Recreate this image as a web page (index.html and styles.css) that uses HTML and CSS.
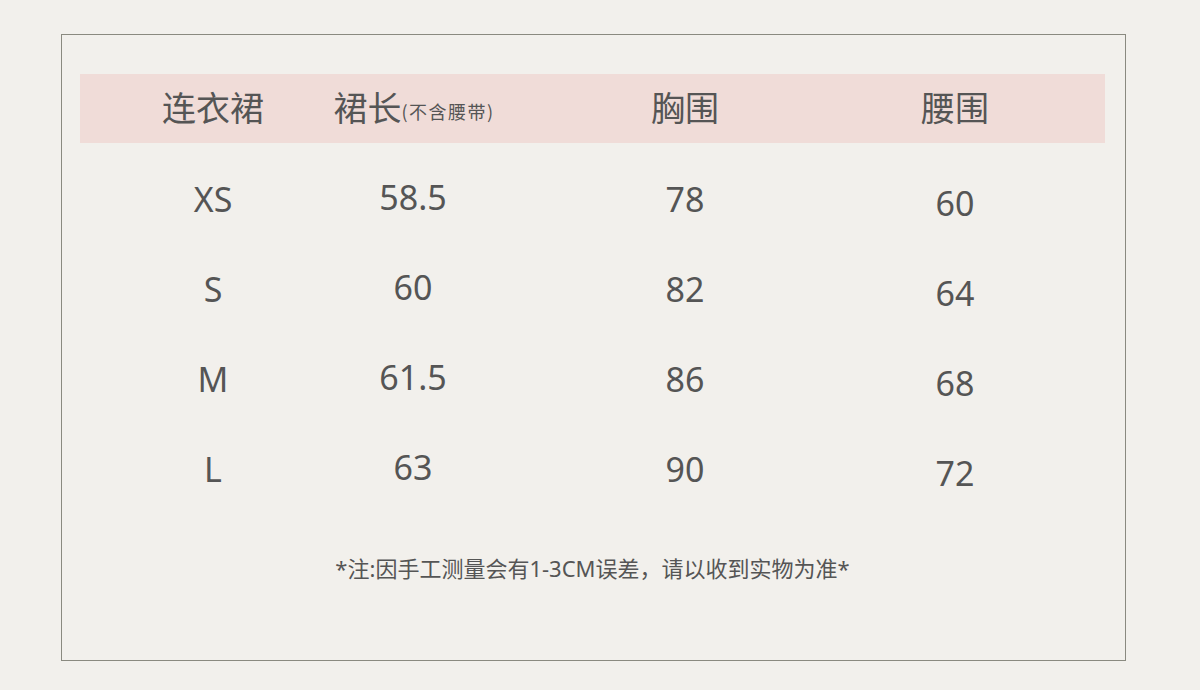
FILE: index.html
```html
<!DOCTYPE html>
<html lang="zh">
<head>
<meta charset="utf-8">
<link rel="stylesheet" href="styles.css">
</head>
<body>
<div class="card">
  <div class="table">
    <div class="row head">
      <div class="cell">连衣裙</div>
      <div class="cell c2">裙长<span class="small">(不含腰带)</span></div>
      <div class="cell">胸围</div>
      <div class="cell">腰围</div>
    </div>
    <div class="row body">
      <div class="cell">XS</div><div class="cell c2">58.5</div><div class="cell">78</div><div class="cell c4">60</div>
    </div>
    <div class="row body">
      <div class="cell">S</div><div class="cell c2">60</div><div class="cell">82</div><div class="cell c4">64</div>
    </div>
    <div class="row body">
      <div class="cell">M</div><div class="cell c2">61.5</div><div class="cell">86</div><div class="cell c4">68</div>
    </div>
    <div class="row body">
      <div class="cell">L</div><div class="cell c2">63</div><div class="cell">90</div><div class="cell c4">72</div>
    </div>
  </div>
  <p class="note">*注:因手工测量会有1-3CM误差，请以收到实物为准*</p>
</div>
</body>
</html>
```

FILE: styles.css
```css
html, body {
  margin: 0;
  padding: 0;
  background: #f2f0ec;
}
body {
  width: 1200px;
  height: 690px;
  overflow: hidden;
  font-family: "Noto Sans", "Noto Sans CJK SC", sans-serif;
  color: #555555;
}
.card {
  box-sizing: border-box;
  margin: 34px 0 0 61px;
  width: 1065px;
  height: 627px;
  border: 1px solid #8a8a80;
  padding: 39px 20px 0 18px;
}
.row {
  display: grid;
  grid-template-columns: 266px 134px 410px 130px;
}
.head {
  background: #f0dcd8;
  height: 69px;
  align-items: center;
  font-family: "Noto Sans CJK SC", sans-serif;
  font-size: 34px;
  margin-bottom: 11px;
}
.cell {
  display: flex;
  justify-content: center;
  align-items: center;
  white-space: nowrap;
}
.head .cell {
  padding-bottom: 5px;
}
.head .c2 {
  padding-left: 2px;
}
.small {
  font-size: 18px;
  padding-top: 9px;
  letter-spacing: 1.5px;
}
.body {
  height: 90px;
  font-size: 34px;
}
.body .c2 {
  padding-bottom: 4px;
}
.body .c4 {
  padding-top: 8px;
}
.note {
  margin: 39px 0 0;
  text-align: center;
  font-family: "Noto Sans", "Noto Sans CJK SC", sans-serif;
  font-size: 22px;
  line-height: 30px;
}
```
